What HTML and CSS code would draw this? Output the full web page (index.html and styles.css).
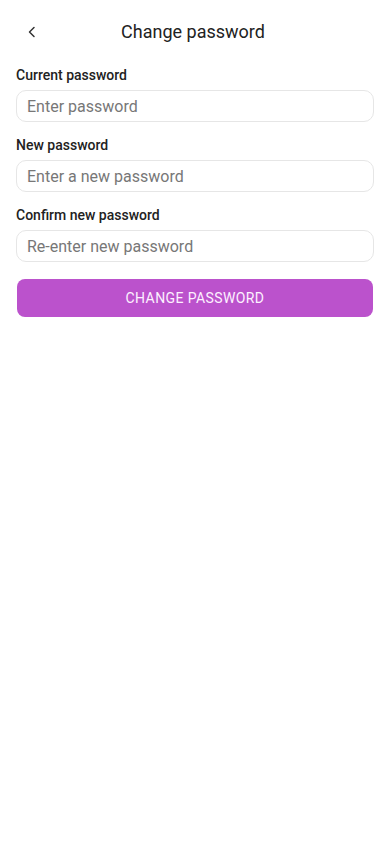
FILE: index.html
```html
<!DOCTYPE html>
<html lang="en">
<head>
    <meta charset="UTF-8">
    <meta name="viewport" content="width=device-width, initial-scale=1.0">
    <title>Change password</title>
    <link rel="stylesheet" href="styles.css">
</head>
<body>
    <div class="header">
        <button class="back" aria-label="Back">
            <svg width="16" height="16" viewBox="0 0 16 16" fill="none" stroke="#333" stroke-width="1.5" stroke-linecap="round" stroke-linejoin="round">
                <path d="M10 3.5 L5.5 8 L10 12.5"/>
            </svg>
        </button>
        <div class="title">Change password</div>
    </div>

    <form class="form" onsubmit="return false">
        <div class="field">
            <label for="current">Current password</label>
            <input type="password" id="current" placeholder="Enter password">
        </div>
        <div class="field">
            <label for="newpass">New password</label>
            <input type="password" id="newpass" placeholder="Enter a new password">
        </div>
        <div class="field">
            <label for="confirm">Confirm new password</label>
            <input type="password" id="confirm" placeholder="Re-enter new password">
        </div>
        <button class="submit" type="submit">CHANGE PASSWORD</button>
    </form>
</body>
</html>
```

FILE: styles.css
```css
body, html {
    margin: 0;
    padding: 0;
    font-family: Roboto, 'Noto Sans', sans-serif;
    background: #ffffff;
    color: #222;
}

.header {
    position: relative;
    height: 64px;
    display: flex;
    align-items: center;
    justify-content: center;
    padding-right: 4px;
}

.header .back {
    position: absolute;
    left: 24px;
    top: 24px;
    width: 16px;
    height: 16px;
    padding: 0;
    border: none;
    background: none;
    display: flex;
    cursor: pointer;
}

.title {
    font-size: 18px;
    color: #222;
    margin-bottom: 1px;
}

.form {
    padding: 1px 16px 0;
    display: flex;
    flex-direction: column;
}

.field {
    display: flex;
    flex-direction: column;
    margin-bottom: 13px;
}

.field label {
    font-size: 14px;
    font-weight: 500;
    color: #222;
    line-height: 20px;
    margin-bottom: 5px;
}

.field input {
    height: 32px;
    box-sizing: border-box;
    border: 1px solid #e6e6e6;
    border-radius: 10px;
    padding: 0 10px;
    font-family: inherit;
    font-size: 16px;
    color: #222;
    outline: none;
}

.field input::placeholder {
    color: #777;
}

.submit {
    margin: 4px 1px 0;
    height: 38px;
    border: none;
    border-radius: 8px;
    background: #bb52cc;
    color: #fdf0ff;
    font-family: inherit;
    font-size: 14px;
    letter-spacing: 0.4px;
    cursor: pointer;
}
```
